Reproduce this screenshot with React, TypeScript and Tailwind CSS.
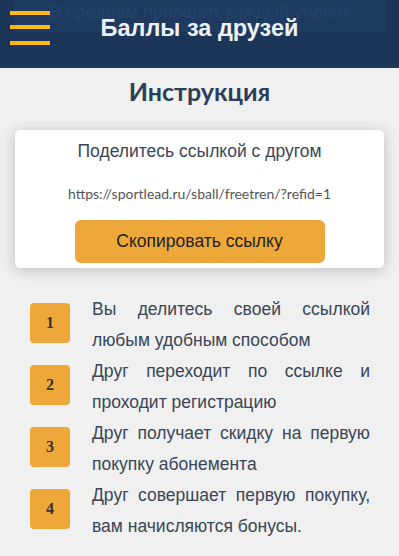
import React from 'react';

const steps = [
  'Вы делитесь своей ссылкой любым удобным способом',
  'Друг переходит по ссылке и проходит регистрацию',
  'Друг получает скидку на первую покупку абонемента',
  'Друг совершает первую покупку, вам начисляются бонусы.',
];

export default function App() {
  return (
    <div className="min-h-[556px] bg-[#f0f0f0] [font-family:'Liberation_Sans',Arial,sans-serif]">
      {/* header */}
      <div className="relative h-[68px] overflow-hidden bg-[#1c365a]">
        <div className="absolute left-[15px] right-[14px] top-[-6px] h-[38px] rounded-[3px] border border-[#213d63] bg-[#1e3a5f] text-center text-[18px] leading-[34px] text-[#25426a]">
          В среднем приводит каждый ученик
        </div>
        <div className="absolute left-[10px] top-[11px] flex flex-col">
          <span className="h-[4px] w-[40px] bg-[#fdb813]" />
          <span className="mt-[10px] h-[4px] w-[40px] bg-[#fdb813]" />
          <span className="mt-[12px] h-[4px] w-[40px] bg-[#fdb813]" />
        </div>
        <h1 className="relative pt-[14px] text-center text-[23.5px] font-bold leading-[28px] text-[#eef2f7]">
          Баллы за друзей
        </h1>
      </div>

      {/* instruction */}
      <h2 className="pt-[8px] text-center [font-family:'Lato',sans-serif] text-[25px] font-bold leading-[30px] text-[#2d3f57]">
        Инструкция
      </h2>

      <div className="mx-[15px] mt-[24px] rounded-[5px] bg-white px-4 pb-[5px] pt-[10px] text-center shadow-[0_2px_14px_rgba(0,0,0,0.22)]">
        <p className="text-[17.5px] leading-[22px] text-[#3a4657]">Поделитесь ссылкой с другом</p>
        <p className="mt-[23px] [font-family:'Lato',sans-serif] text-[14px] leading-[18px] text-[#555]">
          https://sportlead.ru/sball/freetren/?refid=1
        </p>
        <button className="mx-auto mt-[17px] block h-[43px] w-[250px] rounded-[6px] bg-[#eea83a] text-[17.5px] text-[#1f1f1f]">
          Скопировать ссылку
        </button>
      </div>

      <div className="mt-[26px] flex flex-col pl-[30px] pr-[29px]">
        {steps.map((s, i) => (
          <div key={i} className="flex items-start">
            <div className="mt-[9px] flex h-[40px] w-[40px] shrink-0 items-center justify-center rounded-[4px] bg-[#eea83a] [font-family:'Liberation_Serif',serif] text-[16px] font-bold text-[#333]">
              {i + 1}
            </div>
            <p className="ml-[22px] flex-1 text-justify text-[17.5px] leading-[31px] text-[#3a4657]">{s}</p>
          </div>
        ))}
      </div>
    </div>
  );
}
